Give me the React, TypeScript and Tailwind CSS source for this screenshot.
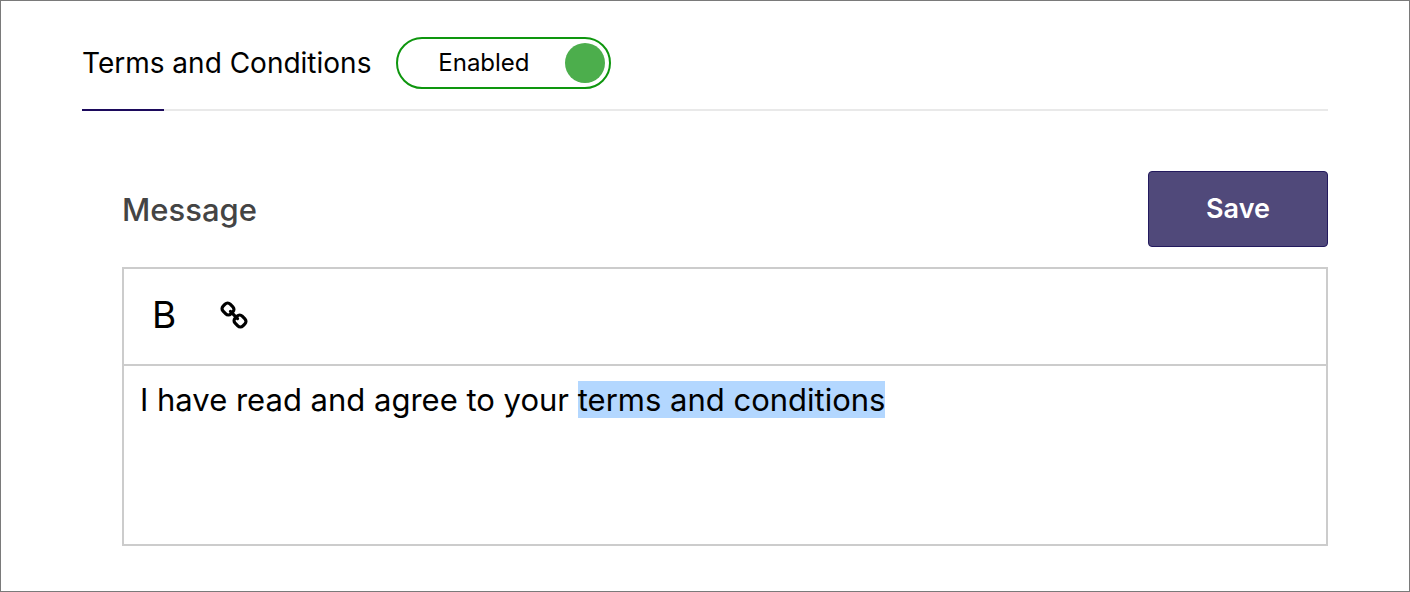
import { useState } from "react";

function LinkIcon() {
  return (
    <svg viewBox="0 0 28 28" className="size-7" fill="none" stroke="currentColor" aria-hidden="true">
      <g transform="rotate(45 14 14)" strokeWidth="3.2">
        <rect x="0" y="9" width="11" height="10" rx="3.6" />
        <rect x="17" y="9" width="11" height="10" rx="3.6" />
        <path d="M9 14h10" strokeLinecap="round" />
      </g>
    </svg>
  );
}

export default function App() {
  const [enabled, setEnabled] = useState(true);

  return (
    <main className="min-h-screen border border-[#7a7a7a] bg-white px-[81px] pt-9 pb-11 font-['Inter',sans-serif] text-black">
      <header className="flex items-center gap-[25px] pb-5">
        <h1 className="text-[28px] leading-9">Terms and Conditions</h1>
        <label className="flex h-[52px] w-[215px] cursor-pointer items-center rounded-full border-2 border-[#0e960e] px-1">
          <input
            type="checkbox"
            role="switch"
            className="sr-only"
            checked={enabled}
            onChange={(e) => setEnabled(e.target.checked)}
          />
          <span className="flex-1 text-center text-2xl">{enabled ? "Enabled" : "Disabled"}</span>
          <span className="size-10 rounded-full bg-[#4cae4c]" />
        </label>
      </header>
      <div className="h-0.5 bg-[#e9e9e9]">
        <div className="h-0.5 w-[82px] bg-[#1c0a5c]" />
      </div>

      <section className="pt-[60px] pl-10">
        <div className="flex items-center justify-between pb-5">
          <h2 id="message-title" className="pt-0.5 text-[31px] leading-10 font-medium text-[#444444]">
            Message
          </h2>
          <button
            type="button"
            className="h-[76px] w-[180px] rounded border border-[#231a5e] bg-[#50497a] text-[27px] font-semibold text-white"
          >
            Save
          </button>
        </div>

        <div className="border-2 border-[#cccccc]">
          <div className="flex h-[97px] items-center gap-11 border-b-2 border-[#cccccc] px-7 pb-1">
            <button type="button" aria-label="Bold" className="text-[37px] leading-10">
              B
            </button>
            <button type="button" aria-label="Insert link">
              <LinkIcon />
            </button>
          </div>
          <div
            role="textbox"
            aria-multiline="true"
            aria-labelledby="message-title"
            contentEditable
            suppressContentEditableWarning
            className="min-h-[178px] px-4 py-4 text-[31px] leading-9 outline-none"
          >
            I have read and agree to your <mark className="bg-[#b3d7ff] text-black">terms and conditions</mark>
          </div>
        </div>
      </section>
    </main>
  );
}
